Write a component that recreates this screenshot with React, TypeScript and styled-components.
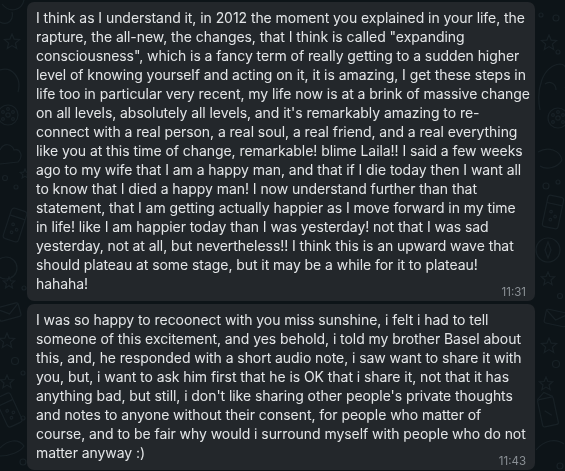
import React from 'react';
import styled, { createGlobalStyle } from 'styled-components';

const GlobalStyle = createGlobalStyle`
  html, body {
    margin: 0;
    padding: 0;
    background: #0d1418;
  }
  body {
    font-family: Inter, "Noto Sans", "Liberation Sans", sans-serif;
    -webkit-font-smoothing: antialiased;
  }
`;

interface Message {
  id: number;
  time: string;
  lines: string[];
}

const messages: Message[] = [
  {
    id: 1,
    time: '11:31',
    lines: [
      'I think as I understand it, in 2012 the moment you explained in your life, the',
      'rapture, the all-new, the changes, that I think is called "expanding',
      'consciousness", which is a fancy term of really getting to a sudden higher',
      'level of knowing yourself and acting on it, it is amazing, I get these steps in',
      'life too in particular very recent, my life now is at a brink of massive change',
      "on all levels, absolutely all levels, and it's remarkably amazing to re-",
      'connect with a real person, a real soul, a real friend, and a real everything',
      'like you at this time of change, remarkable! blime Laila!! I said a few weeks',
      'ago to my wife that I am a happy man, and that if I die today then I want all',
      'to know that I died a happy man! I now understand further than that',
      'statement, that I am getting actually happier as I move forward in my time',
      'in life! like I am happier today than I was yesterday! not that I was sad',
      'yesterday, not at all, but nevertheless!! I think this is an upward wave that',
      'should plateau at some stage, but it may be a while for it to plateau!',
      'hahaha!',
    ],
  },
  {
    id: 2,
    time: '11:43',
    lines: [
      'I was so happy to recoonect with you miss sunshine, i felt i had to tell',
      'someone of this excitement, and yes behold, i told my brother Basel about',
      'this, and, he responded with a short audio note, i saw want to share it with',
      'you, but, i want to ask him first that he is OK that i share it, not that it has',
      "anything bad, but still, i don't like sharing other people's private thoughts",
      'and notes to anyone without their consent, for people who matter of',
      'course, and to be fair why would i surround myself with people who do not',
      'matter anyway :)',
    ],
  },
];

const star = (x: number, y: number, r: number) => {
  const pts: string[] = [];
  for (let i = 0; i < 10; i++) {
    const a = (Math.PI / 5) * i - Math.PI / 2;
    const rr = i % 2 === 0 ? r : r * 0.45;
    pts.push(`${(x + rr * Math.cos(a)).toFixed(1)},${(y + rr * Math.sin(a)).toFixed(1)}`);
  }
  return pts.join(' ');
};

const DottedCircle: React.FC<{ x: number; y: number }> = ({ x, y }) => (
  <g>
    <circle cx={x} cy={y} r={10} />
    <circle cx={x} cy={y} r={2.2} />
    <circle cx={x - 5} cy={y - 3} r={1.4} />
    <circle cx={x + 5} cy={y - 3} r={1.4} />
    <circle cx={x - 5} cy={y + 4} r={1.4} />
    <circle cx={x + 5} cy={y + 4} r={1.4} />
    <circle cx={x} cy={y - 6} r={1.4} />
  </g>
);

const Envelope: React.FC<{ x: number; y: number; rot: number }> = ({ x, y, rot }) => (
  <g transform={`translate(${x} ${y}) rotate(${rot})`}>
    <rect x={-11} y={-7} width={22} height={14} rx={2} />
    <path d="M-11,-6 L0,2 L11,-6" />
  </g>
);

const Bottle: React.FC<{ x: number; y: number; rot: number }> = ({ x, y, rot }) => (
  <g transform={`translate(${x} ${y}) rotate(${rot})`}>
    <rect x={-8} y={-16} width={16} height={32} rx={3} />
    <path d="M-8,-8 L8,-8" />
    <circle cx={-2} cy={0} r={1.3} />
    <circle cx={3} cy={4} r={1.3} />
    <circle cx={-1} cy={8} r={1.3} />
  </g>
);

const Wallpaper = () => (
  <Backdrop>
    <svg width="565" height="471" viewBox="0 0 565 471" fill="none" stroke="#182126" strokeWidth={1.2}>
      {/* left margin */}
      <path d="M2,4 C10,14 22,10 24,0" />
      <path d="M0,22 C8,26 14,20 12,12" />
      <polygon points={star(12, 42, 8)} />
      <path d="M0,70 C12,66 22,78 18,92" />
      <DottedCircle x={8} y={115} />
      <path d="M0,150 C4,142 12,144 14,150 C20,148 24,156 18,162 L0,164" />
      <circle cx={5} cy={178} r={2.5} />
      <polygon points={star(25, 174, 5)} />
      <circle cx={16} cy={187} r={2} />
      <Bottle x={15} y={225} rot={18} />
      <circle cx={6} cy={268} r={11} />
      <polygon points={star(9, 283, 6)} />
      <circle cx={24} cy={288} r={2} />
      <Envelope x={9} y={312} rot={-15} />
      <polygon points={star(7, 341, 8)} />
      <circle cx={15} cy={361} r={3.5} />
      <circle cx={23} cy={373} r={2} />
      <polygon points={star(7, 382, 7)} />
      <Bottle x={9} y={410} rot={-25} />
      <circle cx={23} cy={418} r={2} />
      <path d="M0,448 C8,440 18,438 24,446 C20,452 10,456 0,456" />
      <circle cx={23} cy={462} r={3} />
      {/* right margin */}
      <circle cx={541} cy={15} r={2} />
      <circle cx={556} cy={18} r={3} />
      <polygon points={star(549, 43, 8)} />
      <circle cx={558} cy={52} r={2} />
      <path d="M540,110 C536,90 542,66 560,64 C568,64 570,80 565,88" />
      <path d="M545,84 C550,80 556,84 556,90" />
      <DottedCircle x={558} y={118} />
      <path d="M538,152 C548,146 560,150 562,160 C558,168 546,170 540,166" />
      <circle cx={546} cy={186} r={3} />
      <circle cx={558} cy={182} r={2} />
      <Bottle x={553} y={212} rot={12} />
      <circle cx={548} cy={250} r={12} />
      <path d="M548,242 L551,250 L548,258 L545,250 Z" />
      <polygon points={star(548, 279, 7)} />
      <circle cx={560} cy={296} r={2.5} />
      <Envelope x={556} y={318} rot={12} />
      <polygon points={star(549, 346, 8)} />
      <circle cx={556} cy={364} r={3.5} />
      <polygon points={star(546, 384, 7)} />
      <g transform="translate(548 412) rotate(-12)">
        <rect x={-8} y={-14} width={16} height={28} rx={2} />
        <path d="M-8,-14 L0,-20 L8,-14" />
        <path d="M-3,-2 L3,4" />
      </g>
      <path d="M536,450 C544,440 556,438 564,444" />
      <circle cx={560} cy={466} r={3} />
    </svg>
  </Backdrop>
);

const App: React.FC = () => {
  return (
    <>
      <GlobalStyle />
      <Wallpaper />
      <StyledChat>
        {messages.map((m) => (
          <StyledBubble key={m.id}>
            <StyledText>
              {m.lines.map((line, i) => (
                <StyledLine key={i}>{line}</StyledLine>
              ))}
            </StyledText>
            <StyledMeta>{m.time}</StyledMeta>
          </StyledBubble>
        ))}
      </StyledChat>
    </>
  );
};

const Backdrop = styled.div`
  position: fixed;
  inset: 0;
  z-index: 0;
  pointer-events: none;
  svg {
    display: block;
  }
`;

const StyledChat = styled.div`
  position: relative;
  z-index: 1;
  display: flex;
  flex-direction: column;
  gap: 3px;
  padding: 2px 30px 0 27px;
`;

const StyledBubble = styled.div`
  display: flex;
  flex-direction: column;
  background: #23272b;
  border-radius: 7px;
  padding: 6px 9px 1px 9px;
`;

const StyledText = styled.div`
  color: #e3e5e7;
  font-size: 14px;
  line-height: 19px;
  letter-spacing: -0.06px;
`;

const StyledLine = styled.span`
  display: block;
  white-space: nowrap;
`;

const StyledMeta = styled.span`
  align-self: flex-end;
  margin-top: -8px;
  font-size: 11.5px;
  line-height: 15px;
  color: #8b9196;
`;

export default App;
